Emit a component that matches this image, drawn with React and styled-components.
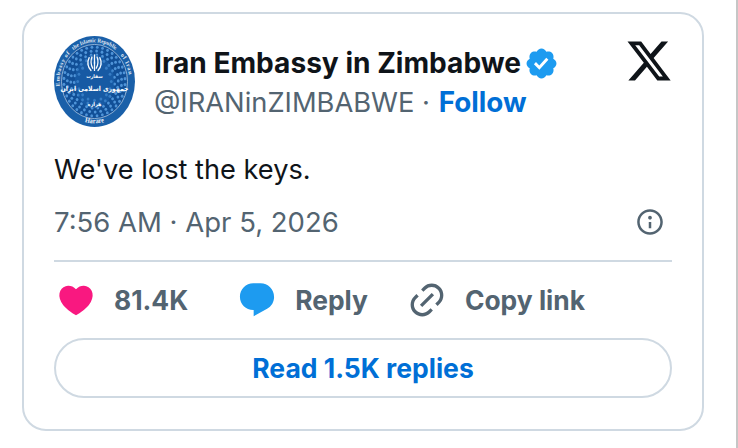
import React from 'react';
import styled, { createGlobalStyle } from 'styled-components';

const Global = createGlobalStyle`
  html, body { margin: 0; padding: 0; background: #fff; }
  body { font-family: 'Inter', 'Liberation Sans', sans-serif; }
`;

const Page = styled.div`
  width: 738px;
  height: 448px;
  display: flex;
  overflow: hidden;
`;

const Main = styled.div`
  flex: 1;
  padding: 12px 0 0 22px;
`;

const Edge = styled.div`
  width: 2px;
  background: #c6c6c6;
`;

const Card = styled.div`
  width: 682px;
  height: 419px;
  box-sizing: border-box;
  border: 2px solid #cfd9e2;
  border-radius: 24px;
  padding: 22px 30px 0 30px;
`;

const Header = styled.div`
  display: flex;
  align-items: flex-start;
  height: 100px;
`;

const Avatar = styled.svg`
  width: 81px;
  height: 91px;
  flex-shrink: 0;
  display: block;
`;

const Who = styled.div`
  margin-left: 19px;
  flex: 1;
  padding-top: 9px;
`;

const NameRow = styled.div`
  display: flex;
  align-items: center;
  gap: 3.5px;
  height: 36px;
`;

const Name = styled.span`
  font-size: 28.1px;
  font-weight: 700;
  color: #0f1419;
`;

const Handle = styled.div`
  display: flex;
  align-items: center;
  height: 42px;
  font-size: 27.3px;
  color: #536471;
`;

const Follow = styled.span`
  margin-left: 1px;
  color: #006fd6;
  font-weight: 700;
  font-size: 27.8px;
`;

const XMark = styled.div`
  margin: 1px -1px 0 0;
`;

const Tweet = styled.div`
  font-size: 27.2px;
  line-height: 36px;
  color: #0f1419;
  margin-top: 16px;
`;

const Meta = styled.div`
  display: flex;
  align-items: center;
  justify-content: space-between;
  height: 36px;
  margin-top: 16px;
  padding-right: 7px;
  font-size: 27.5px;
  color: #536471;
`;

const Rule = styled.div`
  height: 2px;
  background: #cfd9e2;
  margin-top: 20px;
`;

const Actions = styled.div`
  display: flex;
  align-items: center;
  height: 76px;
`;

const Action = styled.div`
  display: flex;
  align-items: center;
  margin-left: ${(p) => p.$gap || 0}px;
  font-size: 26.4px;
  font-weight: 700;
  color: #536471;
`;

const Label = styled.span`
  margin-left: ${(p) => p.$gap}px;
`;

const ReadButton = styled.div`
  height: 60px;
  box-sizing: border-box;
  border: 2px solid #cfd9e2;
  border-radius: 30px;
  display: flex;
  align-items: center;
  justify-content: center;
  font-size: 26.5px;
  font-weight: 700;
  color: #006fd6;
`;

const Icon = styled.svg`
  display: block;
  flex-shrink: 0;
  width: ${(p) => p.$size}px;
  height: ${(p) => p.$size}px;
  fill: ${(p) => p.$color};
`;

const dots = [];
[17, 20.5, 24, 27.5, 31].forEach((r, i) => {
  const n = 16 + i * 5;
  for (let k = 0; k < n; k++) {
    const a = (k / n) * Math.PI * 2 + i * 0.11;
    dots.push([41 + r * Math.cos(a), 41 + r * Math.sin(a)]);
  }
});

const Seal = () => (
  <Avatar viewBox="0 0 82 82" preserveAspectRatio="none">
    <defs>
      <path id="sealLeft" d="M 6.4 48.4 A 35.4 35.4 0 0 1 19.2 13.1" />
      <path id="sealTop" d="M 17.3 14.7 A 35.4 35.4 0 0 1 64.7 14.7" />
      <path id="sealRight" d="M 66.5 16.4 A 35.4 35.4 0 0 1 75.6 48.4" />
      <path id="sealBottom" d="M 21 73.1 A 38.5 38.5 0 0 0 61 73.1" />
    </defs>
    <circle cx="41" cy="41" r="41" fill="#1a60a9" />
    <circle cx="41" cy="41" r="33.4" fill="#114f97" stroke="#b9cfe6" strokeWidth="0.7" />
    {dots.map(([x, y], i) => (
      <circle key={i} cx={x} cy={y} r="1.4" fill="#4f94d8" />
    ))}
    <ellipse cx="41" cy="41" rx="20" ry="24" fill="#1d66b2" opacity="0.5" />
    <text fontFamily="'Liberation Serif', serif" fontSize="5.6" fontWeight="700" letterSpacing="0.5" fill="#e3ebf5">
      <textPath href="#sealLeft" startOffset="8%">Embassy of</textPath>
    </text>
    <text fontFamily="'Liberation Serif', serif" fontSize="5.2" fontWeight="700" fill="#e3ebf5">
      <textPath href="#sealTop" startOffset="50%" textAnchor="middle">the Islamic Republic</textPath>
    </text>
    <text fontFamily="'Liberation Serif', serif" fontSize="5.6" fontWeight="700" letterSpacing="0.5" fill="#e3ebf5">
      <textPath href="#sealRight" startOffset="4%">of Iran</textPath>
    </text>
    <text fontFamily="'Liberation Serif', serif" fontSize="6.4" fontWeight="700" textAnchor="middle" fill="#f2f6fb">
      <textPath href="#sealBottom" startOffset="50%">Harare</textPath>
    </text>
    <g fill="none" stroke="#f7fafd" strokeWidth="1.3" strokeLinecap="round">
      <path d="M41 17v14" />
      <path d="M38.4 19c-1.4 2.6-1.2 7 .8 10M43.6 19c1.4 2.6 1.2 7-.8 10" />
      <path d="M35.6 19.5c-2.2 3.8-1.6 8.5 1.8 11.5M46.4 19.5c2.2 3.8 1.6 8.5-1.8 11.5" />
    </g>
    <text x="41" y="38" textAnchor="middle" fontFamily="'DejaVu Sans', sans-serif" fontSize="4.6" fontWeight="700" fill="#f7fafd">سفارت</text>
    <text x="41" y="50" textAnchor="middle" fontFamily="'DejaVu Sans', sans-serif" fontSize="6.2" fontWeight="700" fill="#ffffff">جمهوری اسلامی ایران</text>
    <text x="41" y="63" textAnchor="middle" fontFamily="'DejaVu Sans', sans-serif" fontSize="5" fontWeight="700" fill="#f7fafd">هراره</text>
  </Avatar>
);

const App = () => (
  <>
    <Global />
    <Page>
      <Main>
        <Card>
          <Header>
            <Seal />
            <Who>
              <NameRow>
                <Name>Iran Embassy in Zimbabwe</Name>
                <Icon viewBox="0 0 24 24" $size={35} $color="#1d9bf0">
                  <path d="M22.25 12c0-1.43-.88-2.67-2.19-3.34.46-1.39.2-2.9-.81-3.91s-2.52-1.27-3.91-.81c-.66-1.31-1.91-2.19-3.34-2.19s-2.67.88-3.33 2.19c-1.4-.46-2.91-.2-3.92.81s-1.26 2.52-.8 3.91c-1.31.67-2.2 1.91-2.2 3.34s.89 2.67 2.2 3.34c-.46 1.39-.21 2.9.8 3.91s2.52 1.26 3.91.81c.67 1.31 1.91 2.19 3.34 2.19s2.68-.88 3.34-2.19c1.39.45 2.9.2 3.91-.81s1.27-2.52.81-3.91c1.31-.67 2.19-1.91 2.19-3.34zm-11.71 4.2L6.8 12.46l1.41-1.42 2.26 2.26 4.8-5.23 1.47 1.36-6.2 6.77z" />
                </Icon>
              </NameRow>
              <Handle>
                @IRANinZIMBABWE&nbsp;·&nbsp;<Follow>Follow</Follow>
              </Handle>
            </Who>
            <XMark>
              <Icon viewBox="0 0 24 24" $size={48} $color="#0f1419">
                <path d="M18.244 2.25h3.308l-7.227 8.26 8.502 11.24H16.17l-5.214-6.817L4.99 21.75H1.68l7.73-8.835L1.254 2.25H8.08l4.713 6.231zm-1.161 17.52h1.833L7.084 4.126H5.117z" />
              </Icon>
            </XMark>
          </Header>
          <Tweet>We've lost the keys.</Tweet>
          <Meta>
            <span>7:56 AM · Apr 5, 2026</span>
            <Icon viewBox="0 0 24 24" $size={30} $color="#536471">
              <path d="M13.5 8.5c0 .83-.67 1.5-1.5 1.5s-1.5-.67-1.5-1.5S11.17 7 12 7s1.5.67 1.5 1.5zM13 17v-5h-2v5h2zm-1 5.25c5.66 0 10.25-4.59 10.25-10.25S17.66 1.75 12 1.75 1.75 6.34 1.75 12 6.34 22.25 12 22.25zM20.25 12c0 4.56-3.69 8.25-8.25 8.25S3.75 16.56 3.75 12 7.44 3.75 12 3.75 20.25 7.44 20.25 12z" />
            </Icon>
          </Meta>
          <Rule />
          <Actions>
            <Action $gap={2}>
              <Icon viewBox="0 0 24 24" $size={40} $color="#f91880">
                <path d="M20.884 13.19c-1.351 2.48-4.001 5.12-8.379 7.67l-.503.3-.504-.3c-4.379-2.55-7.029-5.19-8.382-7.67-1.36-2.5-1.41-4.86-.514-6.67.887-1.79 2.647-2.91 4.601-3.01 1.651-.09 3.368.56 4.798 2.01 1.429-1.45 3.146-2.1 4.796-2.01 1.954.1 3.714 1.22 4.601 3.01.896 1.81.846 4.17-.514 6.67z" />
              </Icon>
              <Label $gap={18}>81.4K</Label>
            </Action>
            <Action $gap={49}>
              <Icon viewBox="0 0 24 24" $size={40} $color="#1d9bf0">
                <path d="M1.751 10c0-4.42 3.584-8 8.005-8h4.366c4.49 0 8.129 3.64 8.129 8.13 0 2.96-1.607 5.68-4.196 7.11l-8.054 4.46v-3.69h-.067c-4.49.1-8.183-3.51-8.183-8.01z" />
              </Icon>
              <Label $gap={18}>Reply</Label>
            </Action>
            <Action $gap={39}>
              <Icon viewBox="0 0 24 24" $size={40} $color="#536471">
                <path d="M18.36 5.64c-1.95-1.96-5.11-1.96-7.07 0L9.88 7.05 8.46 5.64l1.42-1.42c2.73-2.73 7.16-2.73 9.9 0 2.73 2.74 2.73 7.17 0 9.9l-1.42 1.42-1.41-1.42 1.41-1.41c1.96-1.96 1.96-5.12 0-7.07zm-2.12 3.53l-7.07 7.07-1.41-1.41 7.07-7.07 1.41 1.41zm-12.02.71l1.42-1.42 1.41 1.42-1.41 1.41c-1.96 1.96-1.96 5.12 0 7.07 1.95 1.96 5.11 1.96 7.07 0l1.41-1.41 1.42 1.41-1.42 1.42c-2.73 2.73-7.16 2.73-9.9 0-2.73-2.74-2.73-7.17 0-9.9z" />
              </Icon>
              <Label $gap={18}>Copy link</Label>
            </Action>
          </Actions>
          <ReadButton>Read 1.5K replies</ReadButton>
        </Card>
      </Main>
      <Edge />
    </Page>
  </>
);

export default App;
